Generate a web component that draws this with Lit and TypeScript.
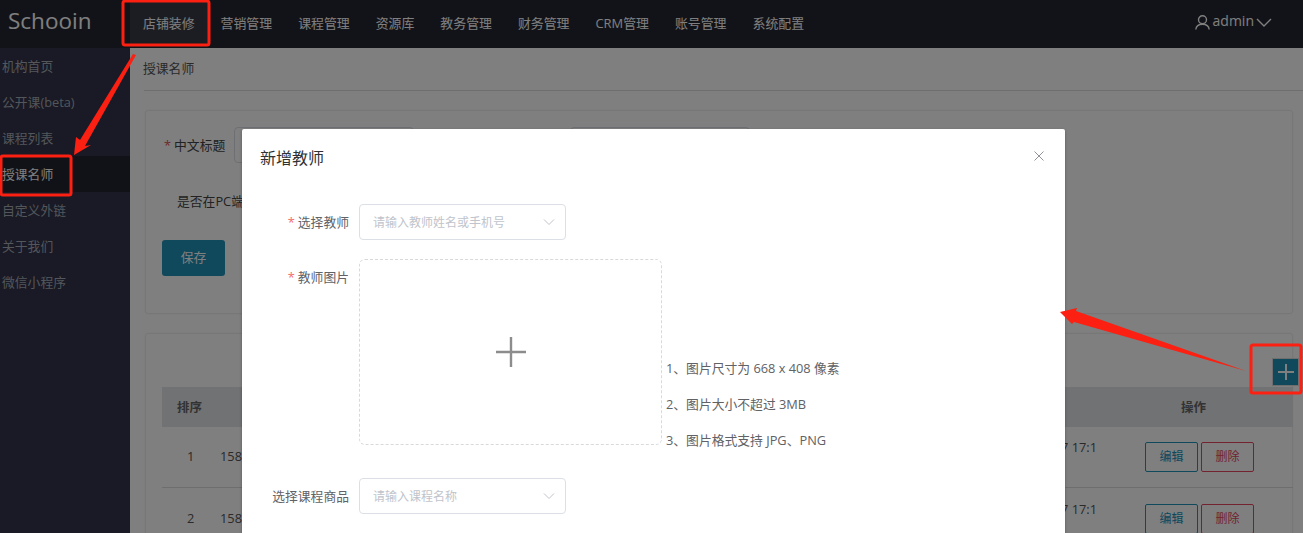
import { LitElement, html, css, svg } from "lit";
import { customElement } from "lit/decorators.js";

const NAV = ["店铺装修", "营销管理", "课程管理", "资源库", "教务管理", "财务管理", "CRM管理", "账号管理", "系统配置"];
const SIDE = ["机构首页", "公开课(beta)", "课程列表", "授课名师", "自定义外链", "关于我们", "微信小程序"];

@customElement("app-root")
export class AppRoot extends LitElement {
  static styles = css`
    :host { display: block; width: 1303px; height: 533px; overflow: hidden; position: relative; background: #fff;
      font-family: "Open Sans", "Noto Sans CJK SC", sans-serif; font-size: 12.8px; color: #666; }
    * { box-sizing: border-box; }
    .top { height: 48px; background: #242630; display: flex; color: #fff; }
    .logo { width: 130px; padding-left: 8px; font-size: 22.5px; line-height: 41px; color: #fff; }
    .nav { display: flex; height: 46px; font-size: 12.9px; }
    .nav span { padding: 0 13px; line-height: 46px; white-space: nowrap; }
    .nav span.on { background: #383a46; }
    .user { margin-left: auto; display: flex; align-items: flex-start; padding: 13px 31px 0 0; font-size: 14px; line-height: 16px; gap: 3px; }
    .uic { margin-top: 2px; }
    .chev { margin-top: 5px; margin-left: -1px; }
    .main { display: flex; height: 485px; }
    .side { width: 130px; background: #32344a; flex: none; color: #a6acb4; }
    .side div { height: 36px; line-height: 36px; padding-left: 2px; white-space: nowrap; }
    .side div.on { background: #22242f; color: #fff; }
    .content { flex: 1; min-width: 0; background: #fff; padding: 0 0 0 14px; overflow: hidden; }
    .crumb { height: 43px; line-height: 40px; border-bottom: 1px solid #dcdcdc; color: #555; margin-right: -2px; text-indent: -1px; }
    .card { background: #fff; border: 1px solid #eee; border-radius: 3px; margin: 19px 10px 0 1px; box-shadow: 0 0 3px rgba(0,0,0,.05); }
    .c1 { height: 204px; padding: 16px 0 0 16px; }
    .frow { display: flex; align-items: center; height: 36px; }
    .star { color: #e0555a; margin-left: 2px; margin-right: 3px; line-height: 34px; }
    .lbl { color: #444; width: 60px; white-space: nowrap; line-height: 34px; }
    .inp { width: 180px; height: 36px; border: 1px solid #dcdfe6; border-radius: 4px; }
    .inp + .inp { margin-left: 156px; }
    .pc { padding-left: 15px; margin-top: 20px; height: 36px; line-height: 36px; color: #444; }
    .save { display: block; width: 63px; height: 36px; margin: 21px 0 0 0; background: #2090b8; border-radius: 3px; color: #fff; text-align: center; line-height: 34px; }
    .c2 { height: 300px; padding: 24px 0 0 16px; position: relative; }
    .add { position: absolute; left: 1126px; top: 24px; width: 27px; height: 28px; background: #2090b8; display: grid; place-items: center; border: 1px solid #ddd; }
    .thead { margin: 29px 0 0 0; height: 40px; background: #e2e4e8; width: 1131px; display: flex; align-items: center; font-weight: 700; padding: 0 87px 2px 15px; color: #666; justify-content: space-between; font-size: 12.5px; }
    .tr { height: 61px; border-bottom: 1px solid #ddd; width: 1131px; display: flex; align-items: center; color: #555; position: relative; padding-left: 25px; font-size: 12.8px; }
    .tr .n { width: 33px; margin-top: -2px; }
    .tr .phone { margin-top: -2px; }
    .tr .date { margin-left: auto; margin-right: 48px; margin-top: -20px; white-space: nowrap; }
    .tr .ops { display: flex; gap: 3px; margin-right: 39px; font-size: 12px; }
    .bt { width: 53px; height: 30px; border-radius: 2px; text-align: center; line-height: 27px; border: 1px solid #2090b8; color: #2090b8; }
    .bt.del { border-color: #e5475f; color: #e5475f; }
    .tr.r2 { border: 0; }
    .dim { position: absolute; inset: 0; background: rgba(0,0,0,.5); }
    .modal { position: absolute; left: 242px; top: 129px; width: 823px; height: 420px; background: #fff; border-radius: 2px; box-shadow: 0 1px 3px rgba(0,0,0,.3); padding: 0 18px; }
    .mhead { display: flex; justify-content: space-between; height: 75px; padding-top: 18px; }
    .mhead b { font-weight: 400; font-size: 16px; line-height: 22px; color: #303133; }
    .x { margin: 2px 1px 0 0; }
    .mrow { display: flex; }
    .mrow label { width: 89px; text-align: right; color: #606266; line-height: 36px; white-space: nowrap; flex: none; }
    .mrow label i { font-style: normal; color: #f56c6c; margin-right: 3px; }
    .sel { margin-left: 10px; width: 207px; height: 36px; border: 1px solid #dcdfe6; border-radius: 4px; display: flex; justify-content: space-between; align-items: center; padding: 0 10px 0 13px; color: #c0c4cc; font-size: 12px; }
    .r-up { margin-top: 19px; height: 186px; }
    .up { margin-left: 10px; width: 303px; height: 186px; border: 1px dashed #d9d9d9; border-radius: 6px; display: grid; place-items: center; flex: none; }
    .hints { padding: 0 0 0 4px; align-self: flex-end; color: #606266; margin-bottom: -13px; }
    .hints div { height: 36px; line-height: 36px; white-space: nowrap; }
    .r-c { margin-top: 33px; }
    .anno { position: absolute; inset: 0; width: 1303px; height: 533px; pointer-events: none; }
  `;

  render() {
    const chev = html`<svg width="12" height="8" viewBox="0 0 12 8"><path d="M1 1.5l5 5 5-5" fill="none" stroke="#c0c4cc" stroke-width="1"/></svg>`;
    const row = (n: string, cls = "") => html`<div class="tr ${cls}"><span class="n">${n}</span><span class="phone">15800000000</span><span class="date">2020-03-17 17:1</span>
      <span class="ops"><span class="bt">编辑</span><span class="bt del">删除</span></span></div>`;
    return html`
      <div class="top">
        <div class="logo">Schooin</div>
        <div class="nav">${NAV.map((t, i) => html`<span class=${i === 0 ? "on" : ""}>${t}</span>`)}</div>
        <div class="user">
          <svg class="uic" width="15" height="15" viewBox="0 0 15 15"><circle cx="7.500" cy="4.800" r="4" fill="none" stroke="#fff" stroke-width="1.400"/><path d="M.8 14.500c.4-3.400 2.900-5.200 6.700-5.200s6.300 1.800 6.700 5.200" fill="none" stroke="#fff" stroke-width="1.400"/></svg>
          <span>admin</span>
          <svg class="chev" width="16" height="10" viewBox="0 0 16 10"><path d="M1 1l7 7 7-7" fill="none" stroke="#fff" stroke-width="1.400"/></svg>
        </div>
      </div>
      <div class="main">
        <div class="side">${SIDE.map((t, i) => html`<div class=${i === 3 ? "on" : ""}>${t}</div>`)}</div>
        <div class="content">
          <div class="crumb">授课名师</div>
          <div class="card c1">
            <div class="frow"><span class="star">*</span><span class="lbl">中文标题</span><span class="inp"></span><span class="inp"></span></div>
            <div class="pc">是否在PC端</div>
            <span class="save">保存</span>
          </div>
          <div class="card c2">
            <span class="add"><svg width="18" height="18" viewBox="0 0 18 18"><path d="M9 1v16M1 9h16" stroke="#fff" stroke-width="2"/></svg></span>
            <div class="thead"><span>排序</span><span>操作</span></div>
            ${row("1")}
            ${row("2", "r2")}
          </div>
        </div>
      </div>
      <div class="dim"></div>
      <div class="modal">
        <div class="mhead"><b>新增教师</b>
          <svg class="x" width="14" height="14" viewBox="0 0 14 14"><path d="M2.500 2.500l9 9M11.500 2.500l-9 9" stroke="#909399" stroke-width="1"/></svg>
        </div>
        <div class="mrow"><label><i>*</i>选择教师</label><div class="sel"><span>请输入教师姓名或手机号</span>${chev}</div></div>
        <div class="mrow r-up"><label><i>*</i>教师图片</label>
          <div class="up"><svg width="30" height="30" viewBox="0 0 30 30"><path d="M15 0v30M0 15h30" stroke="#8c8c8c" stroke-width="2.400"/></svg></div>
          <div class="hints"><div>1、图片尺寸为 668 x 408 像素</div><div>2、图片大小不超过 3MB</div><div>3、图片格式支持 JPG、PNG</div></div>
        </div>
        <div class="mrow r-c"><label>选择课程商品</label><div class="sel"><span>请输入课程名称</span>${chev}</div></div>
      </div>
      <svg class="anno" viewBox="0 0 1303 533">
        ${svg`
          <g fill="none" stroke="#fb2012" stroke-width="3">
            <rect x="123" y="1" width="86" height="44" rx="2"/>
            <rect x="1" y="156" width="70" height="39" rx="2"/>
            <rect x="1251" y="345" width="50" height="48" rx="2"/>
          </g>
          <polygon fill="#fb2012" points="136,55 133,54 80,140 76,137 74,155 91,145 85,146"/>
          <polygon fill="#fb2012" points="1246,371 1074,322 1072,324 1060,312 1077,308 1076,311"/>
        `}
      </svg>
    `;
  }
}
